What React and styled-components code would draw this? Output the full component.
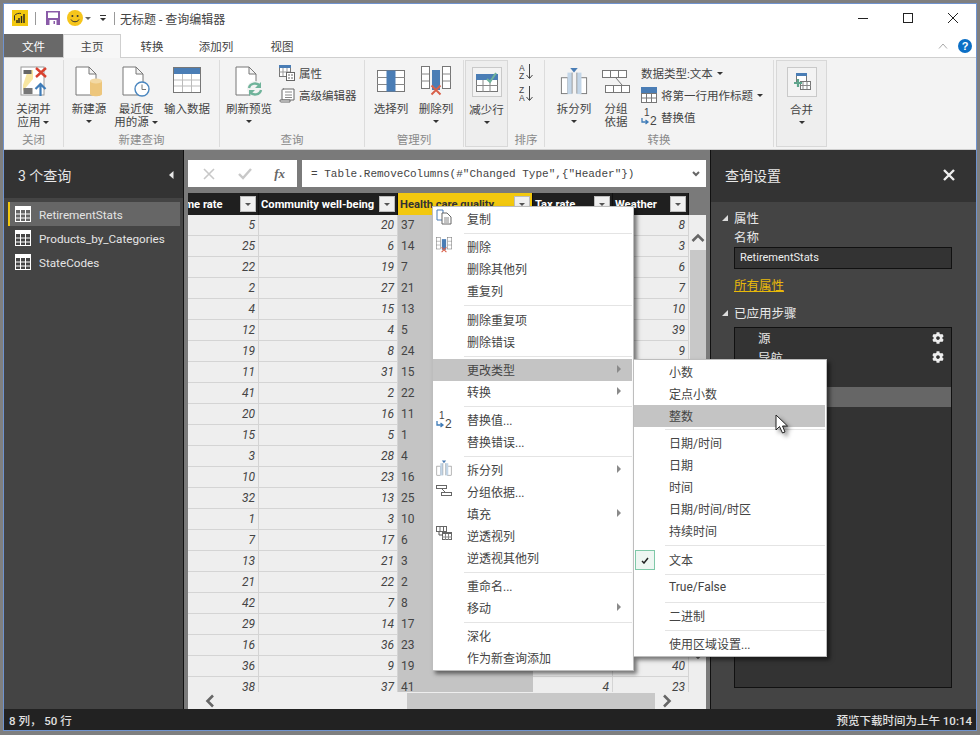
import styled, { createGlobalStyle } from 'styled-components';
import { FaCog } from 'react-icons/fa';

const GlobalStyle = createGlobalStyle`
  html, body { margin: 0; padding: 0; background: #7f7f7f; }
  body { font-family: Roboto, "Noto Sans CJK SC", sans-serif; font-size: 12px; color: #444; }
  * { box-sizing: border-box; }
`;

const col1 = [5, 25, 22, 2, 4, 12, 19, 11, 41, 20, 15, 3, 10, 32, 1, 7, 13, 21, 42, 29, 16, 36, 38];
const col2 = [20, 6, 19, 27, 15, 4, 8, 31, 2, 16, 5, 28, 23, 13, 3, 17, 21, 22, 7, 14, 36, 9, 37];
const col3 = [37, 14, 7, 21, 13, 5, 24, 15, 22, 11, 1, 4, 16, 25, 10, 6, 3, 2, 8, 17, 23, 19, 41];
// most of the last two columns sit under the open menus
const taxRate = { 22: 4 };
const weather = { 0: 8, 1: 3, 2: 6, 3: 7, 4: 10, 5: 39, 6: 9, 21: 40, 22: 23 };

const columns = [
  { name: 'Crime rate', clip: true },
  { name: 'Community well-being' },
  { name: 'Health care quality', selected: true },
  { name: 'Tax rate' },
  { name: 'Weather' },
];

const Page = styled.div`
  position: relative;
  width: 980px;
  height: 735px;
  overflow: hidden;
  padding: 3px 3px 0;
  background: #7f7f7f;
`;

const Window = styled.div`
  width: 974px;
  height: 728px;
  border: 1px solid #6f93cf;
  display: flex;
  flex-direction: column;
  background: #fff;
`;

const TitleBar = styled.div`
  height: 30px;
  display: flex;
  align-items: center;
  padding: 0 0 2px 8px;
  background: #fff;
`;

const TitleDivider = styled.span`
  width: 1px;
  height: 13px;
  background: #999;
  margin: 0 ${(p) => p.$right}px 0 7px;
`;

const QuickGap = styled.span`
  width: ${(p) => p.$w}px;
`;

const TitleText = styled.span`
  color: #444;
  font-size: 12px;
`;

const WindowControls = styled.div`
  margin-left: auto;
  display: flex;
  align-items: center;
  padding-right: 18px;
  gap: 35px;
`;

const Tabs = styled.div`
  height: 23px;
  display: flex;
  align-items: stretch;
  background: #fff;
  position: relative;
  font-size: 11.5px;
`;

const FileTab = styled.div`
  width: 59px;
  background: #696969;
  color: #fff;
  display: flex;
  align-items: center;
  justify-content: center;
`;

const Tab = styled.div`
  width: ${(p) => p.$w}px;
  display: flex;
  align-items: center;
  justify-content: center;
  color: #444;
  ${(p) => p.$active && `
    background: #f7f7f7;
    border: 1px solid #cfcfcf;
    border-bottom: none;
    height: 24px;
    padding-bottom: 1px;
    z-index: 1;
  `}
`;

const TabTools = styled.div`
  margin-left: auto;
  display: flex;
  align-items: center;
  gap: 10px;
  padding-right: 4px;
`;

const HelpBadge = styled.span`
  width: 14px;
  height: 14px;
  border-radius: 50%;
  background: #0b6fc6;
  color: #fff;
  font: bold 11px/14px "Liberation Sans", sans-serif;
  text-align: center;
`;

const Ribbon = styled.div`
  height: 93px;
  background: #f3f3f3;
  border-top: 1px solid #cfcfcf;
  border-bottom: 1px solid #cfcfcf;
  padding-top: 2px;
  display: flex;
  align-items: flex-start;
  font-size: 11.5px;
`;

const Group = styled.div`
  width: ${(p) => p.$w}px;
  height: 87px;
  display: flex;
  flex-direction: column;
  margin-left: ${(p) => p.$ml || 0}px;
  border-right: 1px solid #dcdcdc;
  ${(p) => p.$boxed && `
    background: #eeeeee;
    border: 1px solid #d8d8d8;
  `}
`;

const GroupBody = styled.div`
  flex: 1;
  display: flex;
  align-items: flex-start;
  padding-left: ${(p) => p.$pl || 0}px;
  gap: ${(p) => p.$gap || 0}px;
`;

const GroupLabel = styled.div`
  height: 14px;
  line-height: 14px;
  text-align: center;
  color: #8a8a8a;
`;

const LargeButton = styled.div`
  width: ${(p) => p.$w}px;
  padding-top: 5px;
  display: flex;
  flex-direction: column;
  align-items: center;
  text-align: center;
  line-height: 13px;
  color: #444;
  white-space: nowrap;
`;

const LargeIcon = styled.div`
  height: 32px;
  margin-bottom: 6px;
  display: flex;
  align-items: center;
  justify-content: center;
`;

const IconFrame = styled.div`
  width: 30px;
  height: 30px;
  border: 1px solid #c9c9c9;
  background: #f3f3f3;
  display: flex;
  align-items: center;
  justify-content: center;
`;

const Caret = styled.span`
  display: inline-block;
  width: 0;
  height: 0;
  border-left: 3px solid transparent;
  border-right: 3px solid transparent;
  border-top: 3px solid ${(p) => p.$color || '#333'};
  margin-top: ${(p) => p.$mt || 0}px;
  margin-left: ${(p) => p.$ml || 0}px;
  vertical-align: middle;
`;

const SmallColumn = styled.div`
  display: flex;
  flex-direction: column;
  padding-top: 2px;
  margin-left: ${(p) => p.$ml || 0}px;
`;

const SmallButton = styled.div`
  height: 22px;
  display: flex;
  align-items: center;
  gap: 4px;
  white-space: nowrap;
`;

const SortColumn = styled.div`
  width: 100%;
  display: flex;
  flex-direction: column;
  align-items: center;
  padding-top: 4px;
  gap: 7px;
`;

const Main = styled.div`
  height: 559px;
  display: flex;
`;

const QueryPane = styled.div`
  width: 180px;
  background: #444;
  border-right: 1px solid #111;
  color: #e6e6e6;
`;

const PaneHeader = styled.div`
  height: ${(p) => p.$h}px;
  background: #333;
  display: flex;
  align-items: center;
  justify-content: space-between;
  font-size: 14px;
  color: #e8e8e8;
  padding: ${(p) => p.$pad};
`;

const QueryList = styled.div`
  padding: 4px 3px 0 4px;
`;

const QueryRow = styled.div`
  height: 24px;
  display: flex;
  align-items: center;
  gap: 8px;
  padding-left: 7px;
  color: #e4e4e4;
  font-size: 11.7px;
  ${(p) => p.$active && `
    background: #666;
    box-shadow: inset 2px 0 0 #f2c80f;
  `}
`;

const QueryName = styled.span`
  padding-top: 2px;
`;

const Center = styled.div`
  width: 526px;
  background: #7a7a7a;
  padding: 10px 4px 0;
  display: flex;
  flex-direction: column;
`;

const FormulaRow = styled.div`
  height: 27px;
  margin-bottom: 6px;
  display: flex;
  gap: 5px;
`;

const FormulaButtons = styled.div`
  width: 109px;
  background: #fff;
  display: flex;
  align-items: center;
  justify-content: space-between;
  padding: 0 12px 0 15px;
`;

const Fx = styled.span`
  font: italic bold 13px "Liberation Serif", serif;
  color: #666;
`;

const FormulaInput = styled.div`
  flex: 1;
  background: #fff;
  display: flex;
  align-items: center;
  justify-content: space-between;
  padding: 0 6px 0 9px;
  font: 11px "Liberation Mono", monospace;
  color: #444;
`;

const TableHead = styled.div`
  width: 501px;
  height: 22px;
  display: grid;
  grid-template-columns: 71px 139px 135px 80px 76px;
  background: #1f1f1f;
`;

const HeadCell = styled.div`
  display: flex;
  align-items: center;
  justify-content: space-between;
  overflow: hidden;
  padding: 0 2px;
  font: bold 11.2px Roboto, sans-serif;
  color: ${(p) => (p.$selected ? '#333' : '#fff')};
  background: ${(p) => (p.$selected ? '#f2c80f' : 'transparent')};
  border-right: 1px solid #111;
`;

const HeadText = styled.span`
  white-space: nowrap;
  margin-left: ${(p) => (p.$clip ? -20 : 0)}px;
`;

const FilterButton = styled.span`
  flex: none;
  width: 16px;
  height: 16px;
  background: #f0f0f0;
  border: 1px solid #bdbdbd;
  display: flex;
  align-items: center;
  justify-content: center;
`;

const TableBody = styled.div`
  height: 477px;
  display: flex;
`;

const Rows = styled.div`
  width: 501px;
  overflow: hidden;
  background: #eee;
`;

const Row = styled.div`
  height: 21px;
  display: grid;
  grid-template-columns: 71px 139px 135px 80px 76px;
`;

const Cell = styled.div`
  border-bottom: 1px solid #d4d4d4;
  border-right: 1px solid #d4d4d4;
  line-height: 20px;
  padding: 0 3px;
  color: #444;
  text-align: right;
  font-style: italic;
  ${(p) => p.$selected && `
    background: #c4c4c4;
    border-right: none;
    border-bottom: 1px solid #c4c4c4;
    text-align: left;
    font-style: normal;
  `}
`;

const VScroll = styled.div`
  width: 17px;
  background: #eee;
  display: flex;
  flex-direction: column;
  align-items: center;
  padding: 18px 0 0 1px;
`;

const VThumb = styled.div`
  width: 16px;
  height: 400px;
  margin-top: 7px;
  background: #c8c8c8;
`;

const HScroll = styled.div`
  height: 17px;
  background: #eee;
  display: flex;
  align-items: center;
  padding-left: 17px;
`;

const HThumb = styled.div`
  width: 248px;
  height: 16px;
  margin: 1px 7px 0 192px;
  background: #c8c8c8;
`;

const SettingsPane = styled.div`
  width: 266px;
  background: #444;
  border-left: 1px solid #111;
  color: #e6e6e6;
`;

const SettingsBody = styled.div`
  padding: 6px 0 0 11px;
`;

const SectionHead = styled.div`
  height: 20px;
  display: flex;
  align-items: center;
  gap: 6px;
  font-size: 12.5px;
  color: #e8e8e8;
`;

const SectionName = styled.span`
  padding-bottom: 2px;
`;

const Triangle = styled.span`
  width: 0;
  height: 0;
  border-left: 6px solid transparent;
  border-bottom: 6px solid #ddd;
`;

const FieldLabel = styled.div`
  height: 19px;
  padding-left: 12px;
  line-height: 19px;
  font-size: 12.5px;
`;

const NameInput = styled.div`
  width: 218px;
  height: 22px;
  margin-left: 12px;
  background: #333;
  border: 1px solid #111;
  padding-left: 5px;
  line-height: 20px;
  font-size: 11px;
  color: #eee;
`;

const AllProps = styled.div`
  margin: 9px 0 9px 12px;
  height: 16px;
  line-height: 16px;
  font-size: 12.5px;
  color: #e8b90a;
  text-decoration: underline;
`;

const StepBox = styled.div`
  width: 218px;
  height: 361px;
  margin: 4px 0 0 12px;
  background: #333;
  border: 1px solid #111;
`;

const Step = styled.div`
  height: 19.67px;
  display: flex;
  align-items: center;
  justify-content: space-between;
  padding: 0 7px 0 23px;
  font-size: 12.5px;
  color: #e6e6e6;
  background: ${(p) => (p.$active ? '#666' : 'transparent')};
`;

const StatusBar = styled.div`
  height: 21px;
  background: #222;
  color: #e0e0e0;
  display: flex;
  align-items: center;
  justify-content: space-between;
  padding: 0 4px 0 5px;
  font-weight: 500;
  font-size: 11.5px;
`;

const Menu = styled.div`
  position: absolute;
  left: ${(p) => p.$x}px;
  top: ${(p) => p.$y}px;
  width: ${(p) => p.$w}px;
  padding: 1px 1px 1px 0;
  background: #fff;
  border: 1px solid #bdbdbd;
  box-shadow: 3px 3px 4px rgba(0, 0, 0, 0.5);
  z-index: ${(p) => p.$z};
`;

const MenuRow = styled.div`
  position: relative;
  height: 22px;
  display: flex;
  align-items: center;
  justify-content: space-between;
  padding: 0 11px 2px ${(p) => p.$pl}px;
  color: #444;
  background: ${(p) => (p.$hot ? '#c4c4c4' : 'transparent')};
`;

const MenuGutterIcon = styled.span`
  position: absolute;
  left: 3px;
  top: 1px;
  display: flex;
`;

const MenuSep = styled.div`
  height: ${(p) => p.$h}px;
  margin-left: ${(p) => p.$ml}px;
  display: flex;
  align-items: center;
  &::after {
    content: '';
    width: 100%;
    height: 1px;
    background: #e4e4e4;
  }
`;

const MenuArrow = styled.span`
  width: 0;
  height: 0;
  border-top: 4px solid transparent;
  border-bottom: 4px solid transparent;
  border-left: 4px solid #8a8a8a;
`;

const CheckBox = styled.span`
  position: absolute;
  left: 1px;
  top: 1px;
  width: 20px;
  height: 20px;
  background: #eef6f2;
  border: 1px solid #7fc8a8;
  display: flex;
  align-items: center;
  justify-content: center;
`;

const Cursor = styled.svg`
  position: absolute;
  left: 775px;
  top: 414px;
  z-index: 5;
  filter: drop-shadow(3px 3px 2px rgba(0, 0, 0, 0.45));
`;

const PbiLogo = () => (
  <svg width="16" height="16" viewBox="0 0 16 16">
    <rect width="16" height="16" fill="#f2c80f" />
    <path d="M2.5 5.5C4 3.5 7 3 9 3.5M2.5 5.5V10.5" fill="none" stroke="#333" />
    <path d="M7 13V8M9.5 13V6M12 13V4M5 13V10" stroke="#222" strokeWidth="1.4" />
  </svg>
);

const SaveIcon = () => (
  <svg width="14" height="14" viewBox="0 0 14 14">
    <rect width="14" height="14" fill="#8a5ba8" />
    <rect x="2" y="1.5" width="10" height="5.5" fill="#fff" />
    <rect x="3.5" y="9" width="7" height="5" fill="#fff" />
    <rect x="7.5" y="10" width="1.5" height="3" fill="#8a5ba8" />
  </svg>
);

const Smiley = () => (
  <svg width="16" height="16" viewBox="0 0 16 16">
    <circle cx="8" cy="8" r="8" fill="#f6c51b" />
    <circle cx="5.4" cy="6" r="1" fill="#333" />
    <circle cx="10.6" cy="6" r="1" fill="#333" />
    <path d="M4 9.5C5.5 12.5 10.5 12.5 12 9.5" fill="none" stroke="#333" />
  </svg>
);

const QuickMore = () => (
  <svg width="8" height="8" viewBox="0 0 8 8">
    <path d="M1 1.5H7" stroke="#333" />
    <path d="M1 4H7L4 7Z" fill="#333" />
  </svg>
);

const CloseApplyIcon = () => (
  <svg width="28" height="32" viewBox="0 0 28 32">
    <rect x="1" y="2" width="23" height="28" fill="#fff" stroke="#9a9a9a" />
    <path d="M8 5H13V14L3 26V20Z" fill="#f8e6a0" />
    <rect x="3.5" y="5" width="8" height="4" fill="#666" />
    <rect x="3.5" y="23" width="9" height="6" fill="#777" />
    <path d="M16 3L26 12M26 3L16 12" stroke="#d8412f" strokeWidth="2.4" />
    <path d="M20.5 31V20M15.5 24L20.5 19L25.5 24" fill="none" stroke="#3f7cb8" strokeWidth="2.2" />
  </svg>
);

const PageShape = () => (
  <path d="M1 2H14L21 9V30H1Z M14 2V9H21" fill="#fff" stroke="#777" />
);

const NewSourceIcon = () => (
  <svg width="28" height="32" viewBox="0 0 28 32">
    <PageShape />
    <path d="M15 16V29C15 32 27 32 27 29V16Z" fill="#edc67c" />
    <ellipse cx="21" cy="16" rx="6" ry="2.4" fill="#f3d9a4" />
  </svg>
);

const RecentIcon = () => (
  <svg width="28" height="32" viewBox="0 0 28 32">
    <PageShape />
    <circle cx="20" cy="24" r="7" fill="#fff" stroke="#4a86bf" strokeWidth="1.4" />
    <path d="M20 19.5V24.5H24" fill="none" stroke="#777" />
  </svg>
);

const EnterDataIcon = () => (
  <svg width="28" height="28" viewBox="0 0 28 28">
    <rect x=".5" y=".5" width="27" height="25" fill="#fff" stroke="#777" />
    <rect x="1" y="1" width="26" height="6" fill="#4a7db5" />
    <path d="M1 13H27M1 19H27M9.5 7V25M18.5 7V25" stroke="#bbb" />
  </svg>
);

const RefreshIcon = () => (
  <svg width="28" height="32" viewBox="0 0 28 32">
    <PageShape />
    <circle cx="20" cy="24" r="8" fill="#f3f3f3" />
    <path d="M14 23C15 18 22 17 25 21M26 25C25 30 18 31 15 27" fill="none" stroke="#6fb39a" strokeWidth="2.4" />
    <path d="M26 17V23H20ZM14 31V25H20Z" fill="#6fb39a" />
  </svg>
);

const PropsIcon = () => (
  <svg width="16" height="16" viewBox="0 0 16 16">
    <rect x=".5" y=".5" width="11" height="11" fill="#fff" stroke="#777" />
    <rect x="0" y="0" width="12" height="3" fill="#4a7db5" />
    <path d="M.5 7H11M4 3V11M8 3V11" stroke="#999" />
    <rect x="7.5" y="7.5" width="8" height="8" fill="#fff" stroke="#666" />
    <path d="M9 10H14M9 13H14" stroke="#666" strokeDasharray="2 1" />
  </svg>
);

const EditorIcon = () => (
  <svg width="16" height="16" viewBox="0 0 16 16">
    <path d="M4 2H15V13H3V3C3 2 4 2 5 2" fill="#fff" stroke="#666" />
    <path d="M1 13H11V15H2C1 15 1 14 1 13Z" fill="#fff" stroke="#666" />
    <path d="M6 5H13M6 8H13M6 10.5H13" stroke="#888" />
  </svg>
);

const ChooseColIcon = () => (
  <svg width="28" height="22" viewBox="0 0 28 22">
    <rect x=".5" y=".5" width="27" height="21" fill="#fff" stroke="#777" />
    <path d="M0 7.5H28M0 14.5H28" stroke="#888" />
    <rect x="9.5" y=".5" width="9" height="21" fill="#4a7db5" />
  </svg>
);

const RemoveColIcon = ({ size = 30 }) => (
  <svg width={size} height={size} viewBox="0 0 30 30">
    <rect x=".5" y=".5" width="8" height="22" fill="#fff" stroke="#777" />
    <rect x="21.5" y=".5" width="8" height="22" fill="#fff" stroke="#777" />
    <path d="M0 8H8M0 15H8M22 8H30M22 15H30" stroke="#888" />
    <rect x="11" y="4" width="8" height="20" fill="#4a7db5" />
    <path d="M10.5 19.5L19.5 28.5M19.5 19.5L10.5 28.5" stroke="#d8604a" strokeWidth="2" />
  </svg>
);

const ReduceIcon = () => (
  <svg width="22" height="20" viewBox="0 0 22 20">
    <rect x=".5" y="7.5" width="21" height="12" fill="#fff" stroke="#777" />
    <rect x="0" y="2" width="22" height="6" fill="#4a7db5" />
    <path d="M7 8V20M14 8V20M0 13.5H22" stroke="#888" />
    <path d="M11 7L14 10L20 1" fill="none" stroke="#6fb39a" strokeWidth="2" />
  </svg>
);

const SortIcon = ({ top, bottom }) => (
  <svg width="14" height="15" viewBox="0 0 14 15">
    <text x="0" y="7" fontFamily="Liberation Sans" fontSize="8.5" fill="#444">{top}</text>
    <text x="0" y="14.5" fontFamily="Liberation Sans" fontSize="8.5" fill="#444">{bottom}</text>
    <path d="M10.5 0V14M7.5 11L10.5 14.5L13.5 11" fill="none" stroke="#444" />
  </svg>
);

const SplitIcon = ({ size = 28 }) => (
  <svg width={size} height={size} viewBox="0 0 28 30">
    <rect x=".5" y="11.5" width="7" height="17" fill="#fff" stroke="#777" />
    <rect x="20.5" y="11.5" width="7" height="17" fill="#fff" stroke="#777" />
    <rect x="7" y="6" width="5" height="23" fill="#c3d6e8" />
    <rect x="17" y="6" width="5" height="23" fill="#c3d6e8" />
    <path d="M12 6V28.5M17 6V28.5" stroke="#999" />
    <path d="M10 1H18L14 6Z" fill="#4a7db5" />
  </svg>
);

const GroupIcon = () => (
  <svg width="28" height="23" viewBox="0 0 28 23">
    <rect x=".5" y=".5" width="24" height="7" fill="#fff" stroke="#777" />
    <path d="M8.5 .5V7.5M16.5 .5V7.5" stroke="#777" />
    <path d="M14 8L20 15" stroke="#777" />
    <rect x="3.5" y="15.5" width="24" height="7" fill="#fff" stroke="#777" />
    <path d="M11.5 15.5V22.5M19.5 15.5V22.5" stroke="#777" />
  </svg>
);

const MenuGroupIcon = () => (
  <svg width="16" height="16" viewBox="0 0 16 16">
    <rect x=".5" y="3.5" width="10" height="3" fill="#fff" stroke="#666" />
    <path d="M6 7L9 10" stroke="#666" />
    <rect x="5.5" y="10.5" width="10" height="3" fill="#fff" stroke="#666" />
  </svg>
);

const FirstRowIcon = () => (
  <svg width="16" height="16" viewBox="0 0 16 16">
    <rect x="0" y="0" width="16" height="6" fill="#4a7db5" />
    <rect x=".5" y="6.5" width="15" height="9" fill="#fff" stroke="#777" />
    <path d="M0 11H16M5.5 6V16M10.5 6V16" stroke="#777" />
  </svg>
);

const ReplaceIcon = () => (
  <svg width="16" height="20" viewBox="0 0 16 20">
    <text x="3" y="9" fontFamily="Liberation Sans" fontSize="10" fill="#444">1</text>
    <text x="9" y="18" fontFamily="Liberation Sans" fontSize="12" fill="#444">2</text>
    <path d="M1 11V15H6.5M4.5 13L7 15L4.5 17" fill="none" stroke="#3f7cb8" strokeWidth="1.3" />
  </svg>
);

const MergeIcon = () => (
  <svg width="18" height="18" viewBox="0 0 18 18">
    <rect x="3.5" y=".5" width="10" height="9" fill="#fff" stroke="#777" />
    <rect x="3" y="0" width="11" height="3" fill="#4a7db5" />
    <rect x="7.5" y="8.5" width="10" height="8" fill="#fff" stroke="#777" />
    <path d="M10 9V16M14 9V16M8 12.5H18" stroke="#888" />
    <path d="M5 6V14M1 10H9" stroke="#5fa58c" strokeWidth="2.2" />
  </svg>
);

const TableGlyph = () => (
  <svg width="16" height="16" viewBox="0 0 16 16">
    <rect x=".5" y=".5" width="15" height="15" fill="none" stroke="#fff" />
    <rect x="0" y="0" width="16" height="4" fill="#fff" />
    <path d="M0 8H16M0 12H16M5.5 4V16M10.5 4V16" stroke="#fff" />
  </svg>
);

const Chevron = ({ d, w = 14, h = 10 }) => (
  <svg width={w} height={h} viewBox={`0 0 ${w} ${h}`}>
    <path d={d} fill="none" stroke="#666" strokeWidth="2.6" />
  </svg>
);

const CopyIcon = () => (
  <svg width="16" height="16" viewBox="0 0 16 16">
    <path d="M1 1H7V11H1Z" fill="#fff" stroke="#4a7db5" />
    <path d="M6 4H11L15 8V15H6Z" fill="#fff" stroke="#666" />
    <path d="M8 9H13M8 11H13M8 13H13" stroke="#888" />
  </svg>
);

const UnpivotIcon = () => (
  <svg width="16" height="14" viewBox="0 0 16 14">
    <rect x=".5" y=".5" width="10" height="5" fill="#fff" stroke="#666" />
    <path d="M4 .5V5.5M7.5 .5V5.5" stroke="#666" />
    <rect x="6.5" y="6.5" width="9" height="7" fill="#fff" stroke="#666" />
    <rect x="6" y="6" width="10" height="2" fill="#666" />
    <path d="M9.5 8V14M12.5 8V14M6 11H16" stroke="#888" />
    <path d="M3 6V9H7" fill="none" stroke="#555" />
  </svg>
);

const mainMenu = [
  { label: '复制', icon: <CopyIcon /> },
  { sep: 6 },
  { label: '删除', icon: <RemoveColIcon size={16} /> },
  { label: '删除其他列' },
  { label: '重复列' },
  { sep: 7 },
  { label: '删除重复项' },
  { label: '删除错误' },
  { sep: 6 },
  { label: '更改类型', arrow: true, hot: true },
  { label: '转换', arrow: true },
  { sep: 6 },
  { label: '替换值...', icon: <ReplaceIcon /> },
  { label: '替换错误...' },
  { sep: 6 },
  { label: '拆分列', arrow: true, icon: <SplitIcon size={16} /> },
  { label: '分组依据...', icon: <MenuGroupIcon /> },
  { label: '填充', arrow: true },
  { label: '逆透视列', icon: <UnpivotIcon /> },
  { label: '逆透视其他列' },
  { sep: 6 },
  { label: '重命名...' },
  { label: '移动', arrow: true },
  { sep: 6 },
  { label: '深化' },
  { label: '作为新查询添加' },
];

const typeMenu = [
  { label: '小数' },
  { label: '定点小数' },
  { label: '整数', hot: true },
  { sep: 5 },
  { label: '日期/时间' },
  { label: '日期' },
  { label: '时间' },
  { label: '日期/时间/时区' },
  { label: '持续时间' },
  { sep: 7 },
  { label: '文本', checked: true },
  { sep: 6 },
  { label: 'True/False' },
  { sep: 6 },
  { label: '二进制' },
  { sep: 6 },
  { label: '使用区域设置...' },
];

function PopupMenu({ items, x, y, w, z, pad, sepLeft }) {
  return (
    <Menu $x={x} $y={y} $w={w} $z={z}>
      {items.map((item, i) => (item.sep ? (
        <MenuSep key={i} $h={item.sep} $ml={sepLeft} />
      ) : (
        <MenuRow key={i} $hot={item.hot} $pl={pad}>
          {item.icon && <MenuGutterIcon>{item.icon}</MenuGutterIcon>}
          {item.checked && (
            <CheckBox>
              <svg width="8" height="7" viewBox="0 0 8 7">
                <path d="M1 4L3 6L7 1" fill="none" stroke="#222" strokeWidth="1.5" />
              </svg>
            </CheckBox>
          )}
          <span>{item.label}</span>
          {item.arrow && <MenuArrow />}
        </MenuRow>
      )))}
    </Menu>
  );
}

export default function App() {
  return (
    <>
      <GlobalStyle />
      <Page>
        <Window>
          <TitleBar>
            <PbiLogo />
            <TitleDivider $right={10} />
            <SaveIcon />
            <QuickGap $w={7} />
            <Smiley />
            <Caret $color="#666" $ml={2} />
            <QuickGap $w={8} />
            <QuickMore />
            <TitleDivider $right={5} />
            <TitleText>无标题 - 查询编辑器</TitleText>
            <WindowControls>
              <svg width="10" height="10" viewBox="0 0 10 10"><path d="M0 5.5H10" stroke="#222" /></svg>
              <svg width="10" height="10" viewBox="0 0 10 10"><rect x=".5" y=".5" width="9" height="9" fill="none" stroke="#222" /></svg>
              <svg width="10" height="10" viewBox="0 0 10 10"><path d="M0 0L10 10M10 0L0 10" stroke="#222" /></svg>
            </WindowControls>
          </TitleBar>

          <Tabs>
            <FileTab>文件</FileTab>
            <Tab $w={58} $active>主页</Tab>
            <Tab $w={62}>转换</Tab>
            <Tab $w={66}>添加列</Tab>
            <Tab $w={66}>视图</Tab>
            <TabTools>
              <svg width="10" height="6" viewBox="0 0 10 6"><path d="M1 5.5L5 1L9 5.5" fill="none" stroke="#aaa" /></svg>
              <HelpBadge>?</HelpBadge>
            </TabTools>
          </Tabs>

          <Ribbon>
            <Group $w={60}>
              <GroupBody>
                <LargeButton $w={59}>
                  <LargeIcon><CloseApplyIcon /></LargeIcon>
                  <span>关闭并</span>
                  <span>应用 <Caret /></span>
                </LargeButton>
              </GroupBody>
              <GroupLabel>关闭</GroupLabel>
            </Group>

            <Group $w={156}>
              <GroupBody>
                <LargeButton $w={50}>
                  <LargeIcon><NewSourceIcon /></LargeIcon>
                  <span>新建源</span>
                  <Caret $mt={4} />
                </LargeButton>
                <LargeButton $w={44}>
                  <LargeIcon><RecentIcon /></LargeIcon>
                  <span>最近使</span>
                  <span>用的源 <Caret /></span>
                </LargeButton>
                <LargeButton $w={58}>
                  <LargeIcon><EnterDataIcon /></LargeIcon>
                  <span>输入数据</span>
                </LargeButton>
              </GroupBody>
              <GroupLabel>新建查询</GroupLabel>
            </Group>

            <Group $w={145}>
              <GroupBody $pl={6} $gap={7}>
                <LargeButton $w={46}>
                  <LargeIcon><RefreshIcon /></LargeIcon>
                  <span>刷新预览</span>
                  <Caret $mt={4} />
                </LargeButton>
                <SmallColumn>
                  <SmallButton><PropsIcon />属性</SmallButton>
                  <SmallButton><EditorIcon />高级编辑器</SmallButton>
                </SmallColumn>
              </GroupBody>
              <GroupLabel>查询</GroupLabel>
            </Group>

            <Group $w={99}>
              <GroupBody $pl={4}>
                <LargeButton $w={44}>
                  <LargeIcon><ChooseColIcon /></LargeIcon>
                  <span>选择列</span>
                </LargeButton>
                <LargeButton $w={46}>
                  <LargeIcon><RemoveColIcon /></LargeIcon>
                  <span>删除列</span>
                  <Caret $mt={4} />
                </LargeButton>
              </GroupBody>
              <GroupLabel>管理列</GroupLabel>
            </Group>

            <Group $w={43} $ml={1} $boxed>
              <GroupBody>
                <LargeButton $w={41}>
                  <LargeIcon><IconFrame><ReduceIcon /></IconFrame></LargeIcon>
                  <span>减少行</span>
                  <Caret $mt={4} />
                </LargeButton>
              </GroupBody>
            </Group>

            <Group $w={37}>
              <GroupBody>
                <SortColumn>
                  <SortIcon top="A" bottom="Z" />
                  <SortIcon top="Z" bottom="A" />
                </SortColumn>
              </GroupBody>
              <GroupLabel>排序</GroupLabel>
            </Group>

            <Group $w={229}>
              <GroupBody $pl={4}>
                <LargeButton $w={50}>
                  <LargeIcon><SplitIcon /></LargeIcon>
                  <span>拆分列</span>
                  <Caret $mt={4} />
                </LargeButton>
                <LargeButton $w={34}>
                  <LargeIcon><GroupIcon /></LargeIcon>
                  <span>分组</span>
                  <span>依据</span>
                </LargeButton>
                <SmallColumn $ml={8}>
                  <SmallButton>数据类型:文本 <Caret /></SmallButton>
                  <SmallButton><FirstRowIcon />将第一行用作标题 <Caret /></SmallButton>
                  <SmallButton><ReplaceIcon />替换值</SmallButton>
                </SmallColumn>
              </GroupBody>
              <GroupLabel>转换</GroupLabel>
            </Group>

            <Group $w={51} $ml={2} $boxed>
              <GroupBody>
                <LargeButton $w={49}>
                  <LargeIcon><IconFrame><MergeIcon /></IconFrame></LargeIcon>
                  <span>合并</span>
                  <Caret $mt={4} />
                </LargeButton>
              </GroupBody>
            </Group>
          </Ribbon>

          <Main>
            <QueryPane>
              <PaneHeader $h={48} $pad="2px 9px 0 14px">
                3 个查询
                <svg width="5" height="8" viewBox="0 0 5 8"><path d="M4.5 0V8L0 4Z" fill="#e8e8e8" /></svg>
              </PaneHeader>
              <QueryList>
                <QueryRow $active><TableGlyph /><QueryName>RetirementStats</QueryName></QueryRow>
                <QueryRow><TableGlyph /><QueryName>Products_by_Categories</QueryName></QueryRow>
                <QueryRow><TableGlyph /><QueryName>StateCodes</QueryName></QueryRow>
              </QueryList>
            </QueryPane>

            <Center>
              <FormulaRow>
                <FormulaButtons>
                  <svg width="12" height="12" viewBox="0 0 12 12"><path d="M1 1L11 11M11 1L1 11" stroke="#c8c8c8" strokeWidth="1.6" /></svg>
                  <svg width="14" height="12" viewBox="0 0 14 12"><path d="M1 6L5 10L13 1" fill="none" stroke="#c8c8c8" strokeWidth="2.4" /></svg>
                  <Fx>fx</Fx>
                </FormulaButtons>
                <FormulaInput>
                  <span>{'= Table.RemoveColumns(#"Changed Type",{"Header"})'}</span>
                  <svg width="8" height="6" viewBox="0 0 8 6"><path d="M1 1L4 4L7 1" fill="none" stroke="#666" strokeWidth="2" /></svg>
                </FormulaInput>
              </FormulaRow>

              <TableHead>
                {columns.map((c) => (
                  <HeadCell key={c.name} $selected={c.selected}>
                    <HeadText $clip={c.clip}>{c.name}</HeadText>
                    <FilterButton><Caret $color="#555" /></FilterButton>
                  </HeadCell>
                ))}
              </TableHead>

              <TableBody>
                <Rows>
                  {col1.map((v, i) => (
                    <Row key={i}>
                      <Cell>{v}</Cell>
                      <Cell>{col2[i]}</Cell>
                      <Cell $selected>{col3[i]}</Cell>
                      <Cell>{taxRate[i]}</Cell>
                      <Cell>{weather[i]}</Cell>
                    </Row>
                  ))}
                </Rows>
                <VScroll>
                  <Chevron d="M1.5 8L7 2.5L12.5 8" />
                  <VThumb />
                  <Chevron d="M1.5 2L7 7.5L12.5 2" />
                </VScroll>
              </TableBody>

              <HScroll>
                <Chevron w={10} h={14} d="M8 1.5L2.5 7L8 12.5" />
                <HThumb />
                <Chevron w={10} h={14} d="M2 1.5L7.5 7L2 12.5" />
              </HScroll>
            </Center>

            <SettingsPane>
              <PaneHeader $h={52} $pad="0 21px 2px 14px">
                查询设置
                <svg width="12" height="12" viewBox="0 0 12 12"><path d="M1 1L11 11M11 1L1 11" stroke="#eee" strokeWidth="2.4" /></svg>
              </PaneHeader>
              <SettingsBody>
                <SectionHead><Triangle /><SectionName>属性</SectionName></SectionHead>
                <FieldLabel>名称</FieldLabel>
                <NameInput>RetirementStats</NameInput>
                <AllProps>所有属性</AllProps>
                <SectionHead><Triangle /><SectionName>已应用步骤</SectionName></SectionHead>
                <StepBox>
                  <Step>源<FaCog size={12} color="#eee" /></Step>
                  <Step>导航<FaCog size={12} color="#eee" /></Step>
                  <Step />
                  <Step $active />
                </StepBox>
              </SettingsBody>
            </SettingsPane>
          </Main>

          <StatusBar>
            <span>8 列， 50 行</span>
            <span>预览下载时间为上午 10:14</span>
          </StatusBar>
        </Window>

        <PopupMenu items={mainMenu} x={432} y={206} w={202} z={2} pad={34} sepLeft={31} />
        <PopupMenu items={typeMenu} x={633} y={359} w={194} z={3} pad={35} sepLeft={31} />
        <Cursor width="16" height="20" viewBox="0 0 16 20">
          <path d="M1 1V16L4.5 12.5L7.5 19L10 18L7.5 12H12.5Z" fill="#fff" stroke="#222" />
        </Cursor>
      </Page>
    </>
  );
}
